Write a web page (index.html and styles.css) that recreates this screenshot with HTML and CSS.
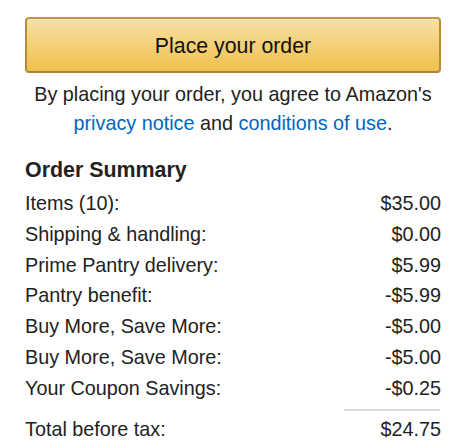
FILE: index.html
```html
<!DOCTYPE html>
<html>
<head>
<meta charset="utf-8">
<link rel="stylesheet" href="styles.css">
</head>
<body>
<div class="box">
  <button class="place-btn">Place your order</button>
  <p class="agree">By placing your order, you agree to Amazon's <a href="#">privacy notice</a> and <a href="#">conditions of use</a>.</p>
  <h3 class="summary-title">Order Summary</h3>
  <div class="rows">
    <div class="row"><span>Items (10):</span><span>$35.00</span></div>
    <div class="row"><span>Shipping &amp; handling:</span><span>$0.00</span></div>
    <div class="row"><span>Prime Pantry delivery:</span><span>$5.99</span></div>
    <div class="row"><span>Pantry benefit:</span><span>-$5.99</span></div>
    <div class="row"><span>Buy More, Save More:</span><span>-$5.00</span></div>
    <div class="row"><span>Buy More, Save More:</span><span>-$5.00</span></div>
    <div class="row"><span>Your Coupon Savings:</span><span>-$0.25</span></div>
  </div>
  <div class="sep-wrap"><div class="sep"></div></div>
  <div class="row total"><span>Total before tax:</span><span>$24.75</span></div>
</div>
</body>
</html>
```

FILE: styles.css
```css
html, body {
  margin: 0;
  padding: 0;
  background: #fff;
}
body {
  font-family: "Liberation Sans", Arial, sans-serif;
  color: #222;
}
.box {
  width: 416px;
  margin-left: 25px;
  padding-top: 17px;
}
.place-btn {
  display: block;
  box-sizing: border-box;
  width: 416px;
  height: 56px;
  margin: 0;
  padding: 3px 0 0;
  border: 2px solid;
  border-color: #c0973f #b68d37 #a8832f;
  border-radius: 4px;
  background: linear-gradient(to bottom, #f7dfa5, #f0c14b);
  box-shadow: inset 0 1px 0 rgba(255,255,255,0.45);
  font-family: "Liberation Sans", Arial, sans-serif;
  font-size: 21.3px;
  color: #111;
  text-align: center;
}
.agree {
  margin: 7px 0 0;
  font-size: 19.8px;
  line-height: 28.5px;
  text-align: center;
  color: #222;
}
.agree a {
  color: #0066c0;
  text-decoration: none;
}
.summary-title {
  margin: 18px 0 0;
  font-size: 21.4px;
  line-height: 30px;
  font-weight: bold;
  color: #222;
}
.rows {
  margin-top: 3px;
}
.row {
  display: flex;
  justify-content: space-between;
  font-size: 19.8px;
  line-height: 30.8px;
}
.sep-wrap {
  display: flex;
  justify-content: flex-end;
  padding-top: 5px;
}
.sep {
  width: 96px;
  height: 2px;
  background: #ddd;
  margin-right: 1px;
}
.total {
  margin-top: 3px;
}
```
